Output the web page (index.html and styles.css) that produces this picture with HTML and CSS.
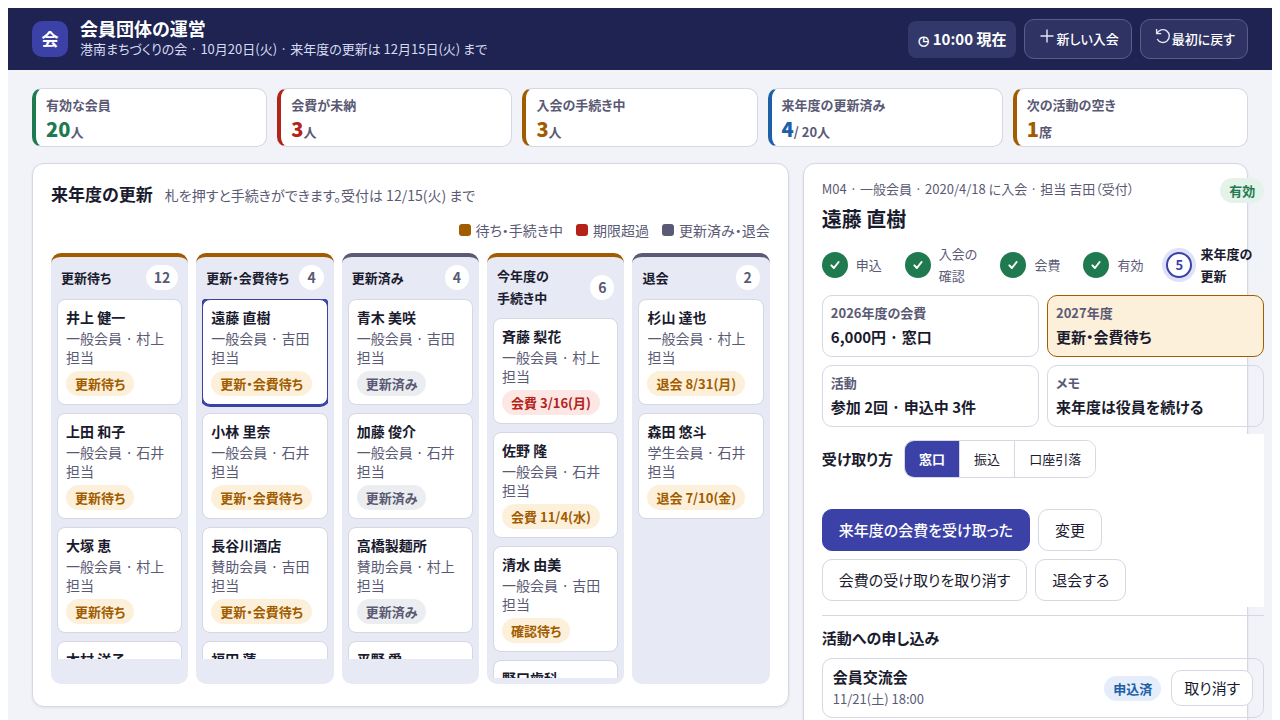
FILE: index.html
```html
<!DOCTYPE html>
<html lang="ja">
<head>
<meta charset="utf-8">
<meta name="viewport" content="width=device-width, initial-scale=1">
<title>会員団体の運営</title>
<link rel="stylesheet" href="styles.css">
</head>
<body>
<div class="app">
  <header class="topbar">
    <div class="logo" aria-hidden="true">会</div>
    <div class="brand">
      <h1 class="brand-title">会員団体の運営</h1>
      <p class="brand-sub">港南まちづくりの会 · 10月20日(火) · 来年度の更新は 12月15日(火) まで</p>
    </div>
    <div class="tools">
      <div class="clock"><span class="clock-icon" aria-hidden="true">◷</span> 10:00 現在</div>
      <button class="tool" type="button"><svg class="tool-icon" viewBox="0 0 16 16" aria-hidden="true"><path d="M8 1.5v13M1.5 8h13"/></svg>新しい入会</button>
      <button class="tool" type="button"><svg class="tool-icon" viewBox="0 0 16 16" aria-hidden="true"><path d="M1.6 1v4.6h4.6M2 5.6A6.4 6.4 0 1 1 2.2 11"/></svg>最初に戻す</button>
    </div>
  </header>

  <main class="content">
    <section class="stats" aria-label="集計">
      <div class="stat green"><div class="stat-label">有効な会員</div><div class="stat-value"><strong>20</strong>人</div></div>
      <div class="stat red"><div class="stat-label">会費が未納</div><div class="stat-value"><strong>3</strong>人</div></div>
      <div class="stat amber"><div class="stat-label">入会の手続き中</div><div class="stat-value"><strong>3</strong>人</div></div>
      <div class="stat blue"><div class="stat-label">来年度の更新済み</div><div class="stat-value"><strong>4</strong>/ 20人</div></div>
      <div class="stat amber"><div class="stat-label">次の活動の空き</div><div class="stat-value"><strong>1</strong>席</div></div>
    </section>

    <div class="split">
      <section class="panel">
        <div class="panel-head">
          <h2 class="panel-title">来年度の更新</h2>
          <p class="panel-note">札を押すと手続きができます。受付は 12/15(火) まで</p>
          <ul class="legend">
            <li><i class="swatch amber"></i>待ち・手続き中</li>
            <li><i class="swatch red"></i>期限超過</li>
            <li><i class="swatch slate"></i>更新済み・退会</li>
          </ul>
        </div>
        <div class="board">
          <section class="column amber">
            <header class="column-head"><h3>更新待ち</h3><span class="count">12</span></header>
            <div class="cards">
              <button class="card" type="button"><b class="name">井上 健一</b><span class="meta">一般会員 · 村上 担当</span><span class="pill amber">更新待ち</span></button>
              <button class="card" type="button"><b class="name">上田 和子</b><span class="meta">一般会員 · 石井 担当</span><span class="pill amber">更新待ち</span></button>
              <button class="card" type="button"><b class="name">大塚 恵</b><span class="meta">一般会員 · 村上 担当</span><span class="pill amber">更新待ち</span></button>
              <button class="card" type="button"><b class="name">木村 洋子</b><span class="meta">一般会員 · 吉田 担当</span><span class="pill amber">更新待ち</span></button>
            </div>
          </section>
          <section class="column amber">
            <header class="column-head"><h3>更新・会費待ち</h3><span class="count">4</span></header>
            <div class="cards">
              <button class="card selected" type="button" aria-pressed="true"><b class="name">遠藤 直樹</b><span class="meta">一般会員 · 吉田 担当</span><span class="pill amber">更新・会費待ち</span></button>
              <button class="card" type="button"><b class="name">小林 里奈</b><span class="meta">一般会員 · 石井 担当</span><span class="pill amber">更新・会費待ち</span></button>
              <button class="card" type="button"><b class="name">長谷川酒店</b><span class="meta">賛助会員 · 吉田 担当</span><span class="pill amber">更新・会費待ち</span></button>
              <button class="card" type="button"><b class="name">福田 蓮</b><span class="meta">一般会員 · 村上 担当</span><span class="pill amber">更新・会費待ち</span></button>
            </div>
          </section>
          <section class="column slate">
            <header class="column-head"><h3>更新済み</h3><span class="count">4</span></header>
            <div class="cards">
              <button class="card" type="button"><b class="name">青木 美咲</b><span class="meta">一般会員 · 吉田 担当</span><span class="pill slate">更新済み</span></button>
              <button class="card" type="button"><b class="name">加藤 俊介</b><span class="meta">一般会員 · 石井 担当</span><span class="pill slate">更新済み</span></button>
              <button class="card" type="button"><b class="name">高橋製麺所</b><span class="meta">賛助会員 · 村上 担当</span><span class="pill slate">更新済み</span></button>
              <button class="card" type="button"><b class="name">平野 愛</b><span class="meta">一般会員 · 石井 担当</span><span class="pill slate">更新済み</span></button>
            </div>
          </section>
          <section class="column amber">
            <header class="column-head"><h3>今年度の<br>手続き中</h3><span class="count">6</span></header>
            <div class="cards">
              <button class="card" type="button"><b class="name">斉藤 梨花</b><span class="meta">一般会員 · 村上 担当</span><span class="pill red">会費 3/16(月)</span></button>
              <button class="card" type="button"><b class="name">佐野 隆</b><span class="meta">一般会員 · 石井 担当</span><span class="pill amber">会費 11/4(水)</span></button>
              <button class="card" type="button"><b class="name">清水 由美</b><span class="meta">一般会員 · 吉田 担当</span><span class="pill amber">確認待ち</span></button>
              <button class="card" type="button"><b class="name">野口歯科</b><span class="meta">賛助会員 · 村上 担当</span><span class="pill amber">確認待ち</span></button>
            </div>
          </section>
          <section class="column slate">
            <header class="column-head"><h3>退会</h3><span class="count">2</span></header>
            <div class="cards">
              <button class="card" type="button"><b class="name">杉山 達也</b><span class="meta">一般会員 · 村上 担当</span><span class="pill amber">退会 8/31(月)</span></button>
              <button class="card" type="button"><b class="name">森田 悠斗</b><span class="meta">学生会員 · 石井 担当</span><span class="pill amber">退会 7/10(金)</span></button>
            </div>
          </section>
        </div>
      </section>

      <aside class="panel detail">
        <div class="detail-head">
          <div>
            <p class="detail-meta">M04 · 一般会員 · 2020/4/18 に入会 · 担当 吉田（受付）</p>
            <h2 class="detail-name">遠藤 直樹</h2>
          </div>
          <span class="pill green">有効</span>
        </div>
        <ol class="steps">
          <li class="step"><span class="dot"><svg viewBox="0 0 12 12" aria-hidden="true"><path d="M2.4 6.4l2.5 2.6 4.7-6"/></svg></span>申込</li>
          <li class="step"><span class="dot"><svg viewBox="0 0 12 12" aria-hidden="true"><path d="M2.4 6.4l2.5 2.6 4.7-6"/></svg></span><span>入会の<br>確認</span></li>
          <li class="step"><span class="dot"><svg viewBox="0 0 12 12" aria-hidden="true"><path d="M2.4 6.4l2.5 2.6 4.7-6"/></svg></span>会費</li>
          <li class="step"><span class="dot"><svg viewBox="0 0 12 12" aria-hidden="true"><path d="M2.4 6.4l2.5 2.6 4.7-6"/></svg></span>有効</li>
          <li class="step current" aria-current="step"><span class="dot">5</span><span>来年度の<br>更新</span></li>
        </ol>
        <dl class="facts">
          <div class="fact"><dt>2026年度の会費</dt><dd>6,000円 · 窓口</dd></div>
          <div class="fact due"><dt>2027年度</dt><dd>更新・会費待ち</dd></div>
          <div class="fact"><dt>活動</dt><dd>参加 2回 · 申込中 3件</dd></div>
          <div class="fact"><dt>メモ</dt><dd>来年度は役員を続ける</dd></div>
        </dl>
        <div class="actions">
          <div class="method">
            <span class="method-label" id="method-label">受け取り方</span>
            <div class="segment" role="group" aria-labelledby="method-label">
              <button class="on" type="button" aria-pressed="true">窓口</button>
              <button type="button" aria-pressed="false">振込</button>
              <button type="button" aria-pressed="false">口座引落</button>
            </div>
          </div>
          <div class="buttons">
            <button class="btn primary" type="button">来年度の会費を受け取った</button>
            <button class="btn" type="button">変更</button>
          </div>
          <div class="buttons">
            <button class="btn" type="button">会費の受け取りを取り消す</button>
            <button class="btn" type="button">退会する</button>
          </div>
        </div>
        <section class="events">
          <h3 class="events-title">活動への申し込み</h3>
          <div class="event">
            <div class="event-text">
              <b class="event-name">会員交流会</b>
              <span class="event-time">11/21(土) 18:00</span>
            </div>
            <span class="pill blue">申込済</span>
            <button class="btn small" type="button">取り消す</button>
          </div>
        </section>
      </aside>
    </div>
  </main>
</div>
</body>
</html>
```
FILE: styles.css
```css
:root {
  --ink: #1a1b2e;
  --muted: #5a5a75;
  --line: #d5d7e2;
  --bg: #f2f3f8;
  --navy: #1e2352;
  --indigo: #3b41a6;
  --green: #1f7a4f;
  --red: #b42318;
  --amber: #a15c00;
  --blue: #1d5fa8;
  --slate: #5a5a75;
}

* { box-sizing: border-box; }

body {
  background: #fff;
  color: var(--ink);
  font: 15px/22px "Noto Sans CJK JP", sans-serif;
  font-feature-settings: "palt";
}

h1, h2, h3, p, ul, ol, dl, dd { margin: 0; padding: 0; }
ul, ol { list-style: none; }

button {
  font: inherit;
  font-feature-settings: inherit;
  color: inherit;
  cursor: pointer;
}

.app { min-height: 100vh; background: var(--bg); }

/* header */
.topbar {
  display: flex;
  align-items: center;
  gap: 12px;
  min-height: 62px;
  padding: 8px 24px;
  background: var(--navy);
  color: #fff;
}
.logo {
  width: 36px;
  height: 36px;
  border-radius: 10px;
  background: var(--indigo);
  font-size: 17px;
  font-weight: 700;
  line-height: 36px;
  text-align: center;
}
.brand { flex: 1; padding-bottom: 2px; }
.brand-title { font-size: 18px; line-height: 22px; }
.brand-sub { color: #d8dbf0; font-size: 13px; line-height: 20px; }
.tools { display: flex; align-items: center; gap: 8px; }
.clock {
  padding: 7px 10px;
  border-radius: 8px;
  background: #33386a;
  font-weight: 700;
}
.clock-icon { font-size: 13px; }
.tool {
  height: 40px;
  padding: 0 12px 0 14px;
  border: 1px solid #595d88;
  border-radius: 10px;
  background: #2f3363;
  font-size: 13px;
  font-weight: 500;
}
.tool-icon {
  width: 16px;
  height: 16px;
  margin-right: 1px;
  vertical-align: 0;
  fill: none;
  stroke: #e4e6f6;
  stroke-width: 1.4;
}

.content { padding: 18px 24px; }

/* totals */
.stats {
  display: grid;
  grid-template-columns: repeat(5, 1fr);
  gap: 10px;
  margin-bottom: 16px;
}
.stat {
  padding: 6px 10px 4px;
  border: 1px solid var(--line);
  border-left: 4px solid var(--tone);
  border-radius: 10px;
  background: #fff;
  color: var(--muted);
  font-size: 13px;
  font-weight: 700;
}
.stat-label { line-height: 20px; }
.stat-value { line-height: 20px; }
.stat-value strong { color: var(--tone); font-size: 20px; line-height: 27px; }
.green { --tone: var(--green); --tint: #e3f3ea; }
.red { --tone: var(--red); --tint: #fde7e5; }
.amber { --tone: var(--amber); --tint: #fdf0da; }
.blue { --tone: var(--blue); --tint: #e4edf9; }
.slate { --tone: var(--slate); --tint: #ecedf0; }

.split {
  display: grid;
  grid-template-columns: minmax(0, 17fr) minmax(0, 10fr);
  align-items: start;
  gap: 14px;
}
.panel {
  padding: 18px;
  border: 1px solid var(--line);
  border-radius: 12px;
  background: #fff;
  box-shadow: 0 1px 3px rgba(26, 27, 46, .08);
}
.panel-head {
  display: flex;
  flex-wrap: wrap;
  align-items: baseline;
  gap: 13px 12px;
  margin-bottom: 12px;
}
.panel-title { font-size: 17px; line-height: 24px; }
.panel-note { color: var(--muted); font-size: 14px; }
.legend {
  display: flex;
  gap: 13px;
  margin-left: auto;
  color: var(--muted);
  font-size: 14px;
}
.legend li { display: flex; align-items: center; gap: 5px; }
.swatch { width: 12px; height: 12px; border-radius: 3px; background: var(--tone); }

/* board */
.board {
  display: grid;
  grid-template-columns: repeat(5, minmax(0, 1fr));
  gap: 8px;
  padding-bottom: 4px;
}
.column {
  padding: 8px 6px 6px;
  border-top: 4px solid var(--tone);
  border-radius: 10px;
  background: #e7e9f4;
}
.column-head {
  display: flex;
  align-items: center;
  justify-content: space-between;
  padding: 0 4px 9px;
}
.column-head h3 { font-size: 13px; white-space: nowrap; }
.count {
  padding: 0 8px;
  border-radius: 13px;
  background: #fff;
  color: var(--muted);
  font-size: 14px;
  font-weight: 700;
  line-height: 25px;
}
.cards {
  display: flex;
  flex-direction: column;
  gap: 8px;
  max-height: 360px;
  overflow-y: auto;
  scrollbar-width: none;
}
.card {
  display: flex;
  flex: none;
  flex-direction: column;
  align-items: flex-start;
  padding: 8px;
  border: 1px solid var(--line);
  border-radius: 8px;
  background: #fff;
  text-align: left;
}
.card.selected { border-color: var(--indigo); box-shadow: 0 0 0 2px var(--indigo); }
.name { margin-bottom: 3px; font-size: 14px; line-height: 18px; }
.meta { margin-bottom: 4px; color: var(--muted); font-size: 14px; line-height: 19px; }
.pill {
  padding: 0 9px;
  border-radius: 13px;
  background: var(--tint);
  color: var(--tone);
  font-size: 13px;
  font-weight: 700;
  line-height: 25px;
  white-space: nowrap;
}

/* member detail */
.detail {
  display: grid;
  grid-template-columns: 1fr;
  padding-top: 14px;
}
.detail-head { display: flex; align-items: flex-start; justify-content: space-between; }
.detail-meta { color: var(--muted); font-size: 13px; }
.detail-name { margin-bottom: 6px; font-size: 20px; line-height: 37px; }
.steps { display: flex; gap: 11px; margin-bottom: 8px; }
.step {
  display: flex;
  flex: none;
  align-items: center;
  gap: 8px;
  padding-right: 12px;
  color: var(--muted);
  font-size: 13px;
  white-space: nowrap;
}
.dot {
  display: grid;
  place-items: center;
  width: 26px;
  height: 26px;
  border-radius: 50%;
  background: var(--green);
}
.dot svg {
  width: 12px;
  height: 12px;
  fill: none;
  stroke: #fff;
  stroke-width: 2;
  stroke-linecap: round;
  stroke-linejoin: round;
}
.current { color: var(--ink); font-weight: 700; }
.current .dot {
  border: 2px solid var(--indigo);
  background: #fff;
  box-shadow: 0 0 0 4px #dfe1f8;
  color: var(--indigo);
}
.facts {
  display: grid;
  grid-template-columns: 1fr 1fr;
  gap: 8px;
  margin-bottom: 7px;
}
.fact {
  padding: 6px 8px;
  border: 1px solid var(--line);
  border-radius: 10px;
}
.fact.due { border-color: var(--amber); background: #fdf0da; }
.fact dt { color: var(--muted); font-size: 13px; font-weight: 700; }
.fact dd { font-size: 15px; font-weight: 700; line-height: 26px; }
.actions { padding: 6px 0; background: #fff; }
.method { display: flex; align-items: center; gap: 11px; margin-bottom: 31px; }
.method-label { font-weight: 700; }
.segment {
  display: flex;
  overflow: hidden;
  border: 1px solid var(--line);
  border-radius: 10px;
}
.segment button {
  height: 36px;
  padding: 0 14px;
  border: 0;
  border-right: 1px solid var(--line);
  background: #fff;
  font-size: 13px;
}
.segment button:last-child { border-right: 0; }
.segment .on { background: var(--indigo); color: #fff; font-weight: 700; }
.buttons { display: flex; gap: 8px; }
.buttons + .buttons { margin-top: 8px; }
.btn {
  height: 42px;
  padding: 0 16px;
  border: 1px solid var(--line);
  border-radius: 10px;
  background: #fff;
}
.btn.primary { border-color: var(--indigo); background: var(--indigo); color: #fff; font-weight: 500; }
.btn.small { height: 36px; padding: 0 12px; }
.events { margin-top: 8px; padding-top: 11px; border-top: 1px solid var(--line); }
.events-title { margin-bottom: 9px; font-size: 15px; }
.event {
  display: flex;
  align-items: center;
  gap: 10px;
  padding: 7px 10px;
  border: 1px solid var(--line);
  border-radius: 10px;
}
.event-text { display: grid; flex: 1; }
.event-name { line-height: 22px; }
.event-time { color: var(--muted); font-size: 13px; }
```
